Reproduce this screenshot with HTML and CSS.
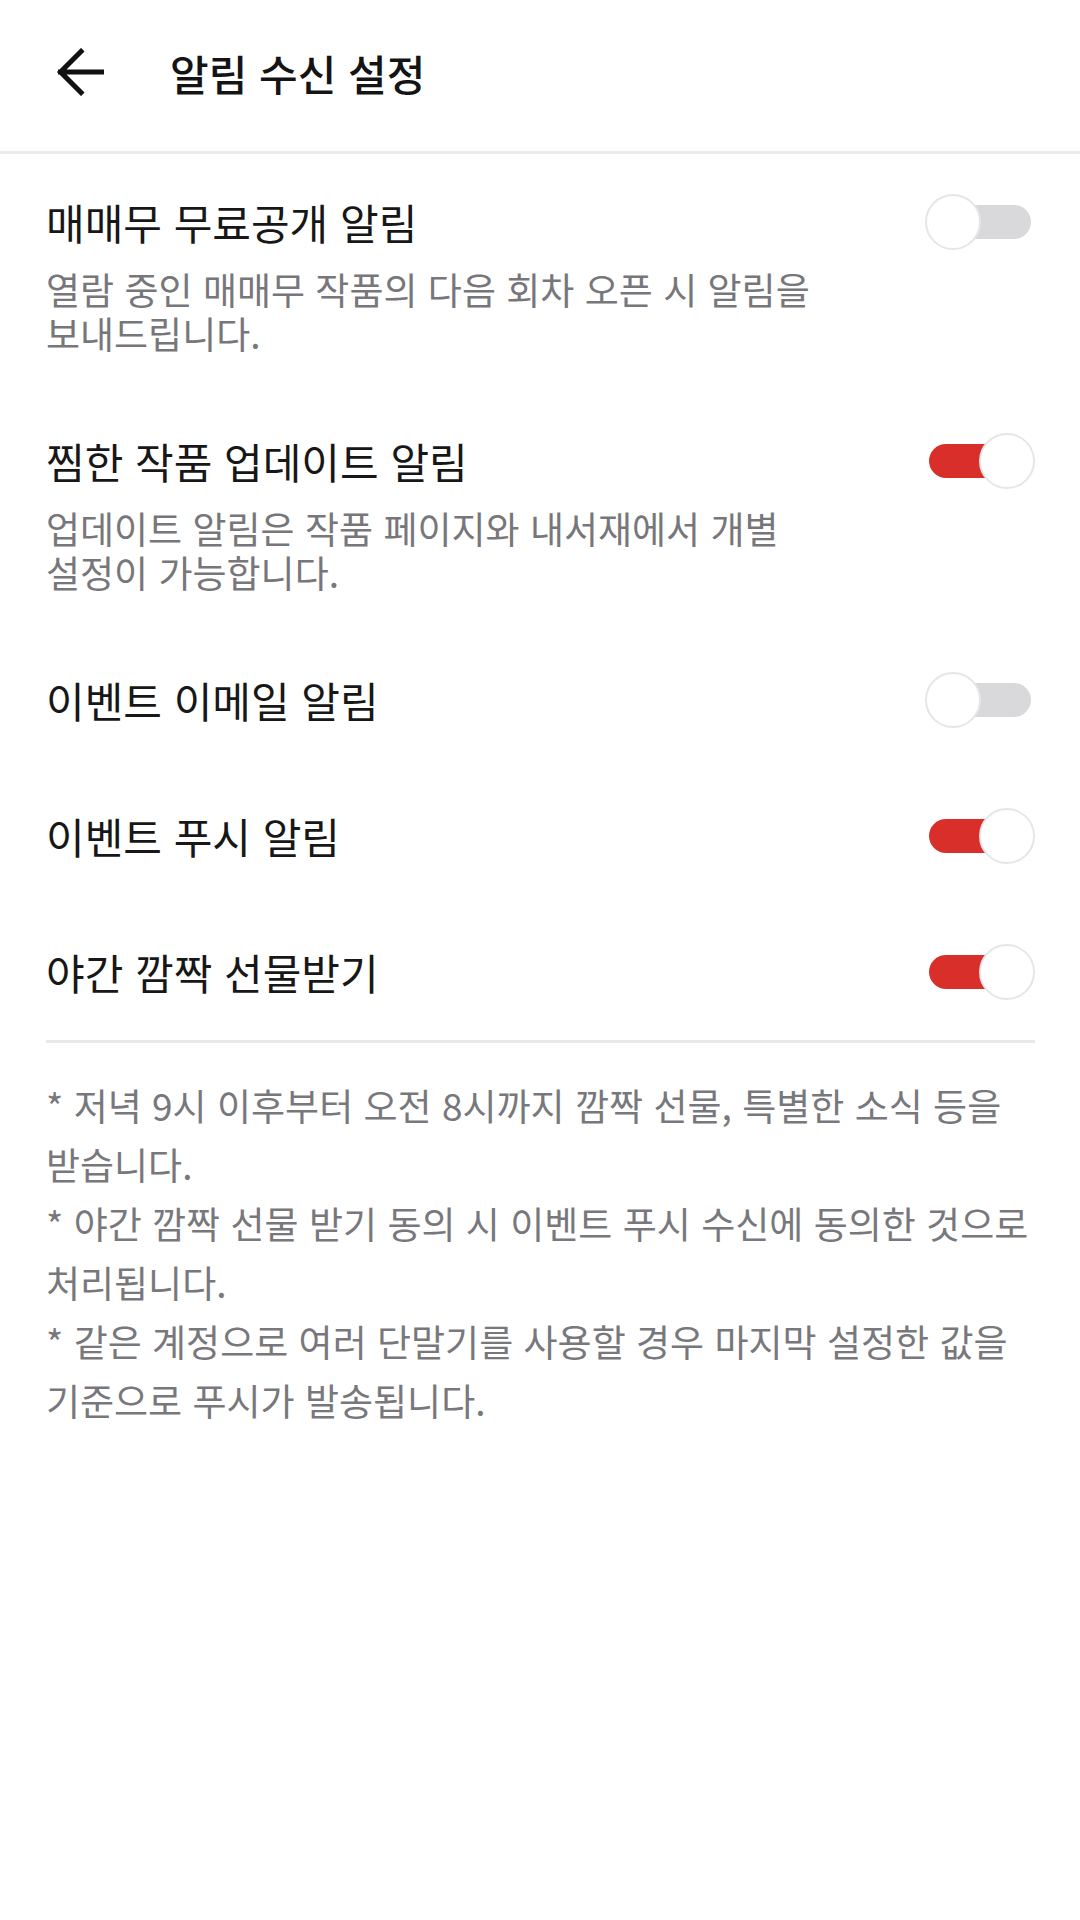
FILE: index.html
```html
<!DOCTYPE html>
<html lang="ko">
<head>
  <meta charset="UTF-8">
  <meta name="viewport" content="width=device-width, initial-scale=1.0">
  <title>알림 수신 설정</title>
  <link rel="stylesheet" href="styles.css">
</head>
<body>

  <div class="topbar">
    <a class="back" href="#">
      <svg width="48" height="48" viewBox="0 0 48 48">
        <path d="M46 24H4.5M25 3.5L4.5 24 25 44.5" fill="none" stroke="#111" stroke-width="5" stroke-linecap="square"/>
      </svg>
    </a>
    <h1>알림 수신 설정</h1>
  </div>

  <div class="settings">
    <div class="row">
      <div class="row-head">
        <span class="row-title">매매무 무료공개 알림</span>
        <span class="switch"><span class="track"></span><span class="thumb"></span></span>
      </div>
      <p class="row-desc">열람 중인 매매무 작품의 다음 회차 오픈 시 알림을 보내드립니다.</p>
    </div>

    <div class="row">
      <div class="row-head">
        <span class="row-title">찜한 작품 업데이트 알림</span>
        <span class="switch on"><span class="track"></span><span class="thumb"></span></span>
      </div>
      <p class="row-desc">업데이트 알림은 작품 페이지와 내서재에서 개별 설정이 가능합니다.</p>
    </div>

    <div class="row">
      <div class="row-head">
        <span class="row-title">이벤트 이메일 알림</span>
        <span class="switch"><span class="track"></span><span class="thumb"></span></span>
      </div>
    </div>

    <div class="row">
      <div class="row-head">
        <span class="row-title">이벤트 푸시 알림</span>
        <span class="switch on"><span class="track"></span><span class="thumb"></span></span>
      </div>
    </div>

    <div class="row">
      <div class="row-head">
        <span class="row-title">야간 깜짝 선물받기</span>
        <span class="switch on"><span class="track"></span><span class="thumb"></span></span>
      </div>
    </div>

    <div class="notes">
      <p>* 저녁 9시 이후부터 오전 8시까지 깜짝 선물, 특별한 소식 등을 받습니다.</p>
      <p>* 야간 깜짝 선물 받기 동의 시 이벤트 푸시 수신에 동의한 것으로 처리됩니다.</p>
      <p>* 같은 계정으로 여러 단말기를 사용할 경우 마지막 설정한 값을 기준으로 푸시가 발송됩니다.</p>
    </div>
  </div>

</body>
</html>
```

FILE: styles.css
```css
/* Common styles */
body {
  margin: 0;
  background-color: #fff;
  font-family: "Noto Sans CJK KR", "Noto Sans", sans-serif;
  color: #151515;
  word-break: keep-all;
}

p {
  margin: 0;
}

/* Top bar */
.topbar {
  height: 151px;
  display: flex;
  align-items: center;
  padding-left: 56px;
  border-bottom: 3px solid #ebebeb;
}

.back {
  display: flex;
  width: 48px;
  height: 48px;
  margin-top: -8px;
}

.topbar h1 {
  margin: -6px 0 0 66px;
  font-size: 42px;
  font-weight: 500;
  color: #141414;
}

/* Settings list */
.settings {
  padding: 0 45px 0 46px;
}

.row {
  padding: 38px 0;
}

.row-head {
  display: flex;
  align-items: center;
  justify-content: space-between;
  height: 60px;
}

.row-title {
  font-size: 42px;
  line-height: 60px;
  color: #171717;
}

.row-desc {
  max-width: 800px;
  margin-top: 15px;
  font-size: 37px;
  line-height: 44px;
  color: #77777b;
}

/* Toggle switch */
.switch {
  position: relative;
  width: 110px;
  height: 56px;
  flex-shrink: 0;
}

.switch .track {
  display: block;
  margin: 11px 4px;
  height: 34px;
  border-radius: 17px;
  background-color: #d9d9db;
}

.switch .thumb {
  position: absolute;
  top: 0;
  left: 0;
  width: 52px;
  height: 52px;
  border: 2px solid #e6e6e6;
  border-radius: 50%;
  background-color: #fff;
}

.switch.on .track {
  background-color: #d92f2a;
}

.switch.on .thumb {
  left: auto;
  right: 0;
}

/* Notes under the list */
.notes {
  border-top: 3px solid #e9e9e9;
  padding-top: 33px;
}

.notes p {
  font-size: 37px;
  line-height: 59px;
  color: #78787c;
}
```
